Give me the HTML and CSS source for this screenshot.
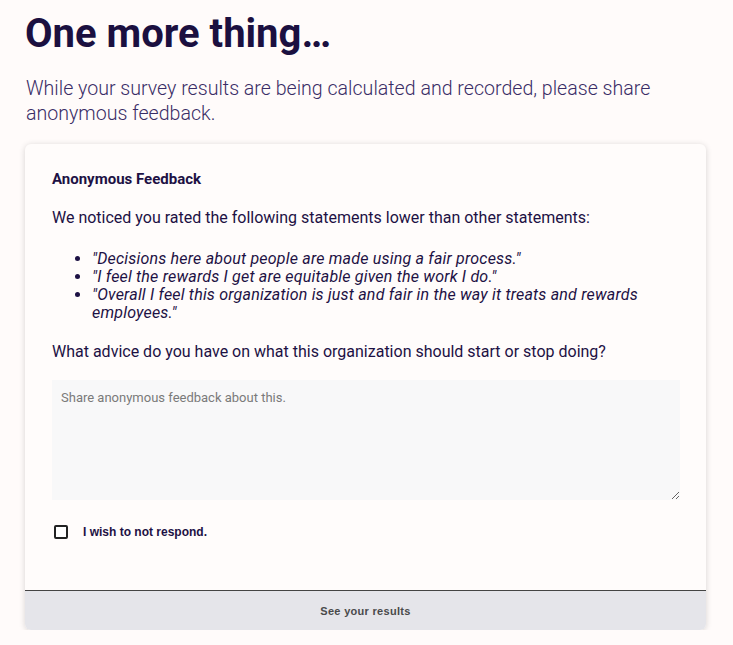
FILE: index.html
```html
<!DOCTYPE html>
<html lang="en">
<head>
  <meta charset="UTF-8" />
  <meta name="viewport" content="width=device-width, initial-scale=1.0"/>
  <title>One more thing</title>
  <link rel="stylesheet" href="styles.css">
</head>
<body>
  <div class="page">
    <h1 class="title">One more thing…</h1>
    <p class="subtitle">While your survey results are being calculated and recorded, please share anonymous feedback.</p>
    <div class="card">
      <div class="card-body">
        <h2 class="card-title">Anonymous Feedback</h2>
        <p class="intro">We noticed you rated the following statements lower than other statements:</p>
        <ul class="statements">
          <li>"Decisions here about people are made using a fair process."</li>
          <li>"I feel the rewards I get are equitable given the work I do."</li>
          <li>"Overall I feel this organization is just and fair in the way it treats and rewards employees."</li>
        </ul>
        <p class="question">What advice do you have on what this organization should start or stop doing?</p>
        <textarea class="feedback" placeholder="Share anonymous feedback about this."></textarea>
        <label class="no-respond">
          <input type="checkbox" class="no-respond-box">
          <span>I wish to not respond.</span>
        </label>
      </div>
      <button class="results-button">See your results</button>
    </div>
  </div>
</body>
</html>
```

FILE: styles.css
```css
body {
  margin: 0;
  background-color: #fffbfa;
  font-family: 'Roboto', sans-serif;
  color: #1d1144;
}
.page {
  padding: 0 27px 0 25px;
}
.title {
  margin: 0;
  padding-top: 9px;
  font-size: 40px;
  font-weight: 700;
  line-height: 50px;
  color: #1b1040;
}
.subtitle {
  margin: 17px 0 0 1px;
  font-size: 19.6px;
  font-weight: 300;
  line-height: 25px;
  color: #3a2d66;
}
.card {
  margin-top: 18px;
  background-color: #fffcfb;
  border-radius: 6px;
  box-shadow: 0 1px 6px rgba(0, 0, 0, 0.16);
  overflow: hidden;
}
.card-body {
  padding: 26px 26px 51px 27px;
}
.card-title {
  margin: 0;
  font-size: 15px;
  font-weight: 700;
  line-height: 18px;
}
.intro {
  margin: 20px 0 0;
  font-size: 16px;
  line-height: 19px;
}
.statements {
  margin: 23px 0 0;
  padding-left: 40px;
  font-size: 16px;
  font-style: italic;
  letter-spacing: 0.2px;
  line-height: 18px;
}
.question {
  margin: 20px 0 0;
  font-size: 16px;
  line-height: 19px;
}
.feedback {
  display: block;
  box-sizing: border-box;
  width: 100%;
  height: 120px;
  margin-top: 19px;
  padding: 10px 9px;
  border: none;
  background-color: #f8f8f9;
  font-family: 'Roboto', sans-serif;
  font-size: 13px;
  color: #333;
  resize: vertical;
  outline: none;
}
.feedback::placeholder {
  color: #7a7a7a;
}
.no-respond {
  display: flex;
  align-items: center;
  gap: 15px;
  margin-top: 25px;
  font-family: 'Liberation Sans', Arial, sans-serif;
  font-size: 12px;
  font-weight: 700;
}
.no-respond-box {
  appearance: none;
  width: 14px;
  height: 14px;
  margin: 0 0 0 2px;
  border: 2px solid #222;
  border-radius: 2px;
  box-sizing: border-box;
  background: #fff;
}
.results-button {
  display: block;
  width: 100%;
  height: 40px;
  border: none;
  border-top: 1px solid #444;
  background-color: #e5e5ea;
  font-family: 'Liberation Sans', Arial, sans-serif;
  font-size: 11px;
  font-weight: 700;
  letter-spacing: 0.3px;
  color: #4a4a4a;
  cursor: pointer;
}
```
